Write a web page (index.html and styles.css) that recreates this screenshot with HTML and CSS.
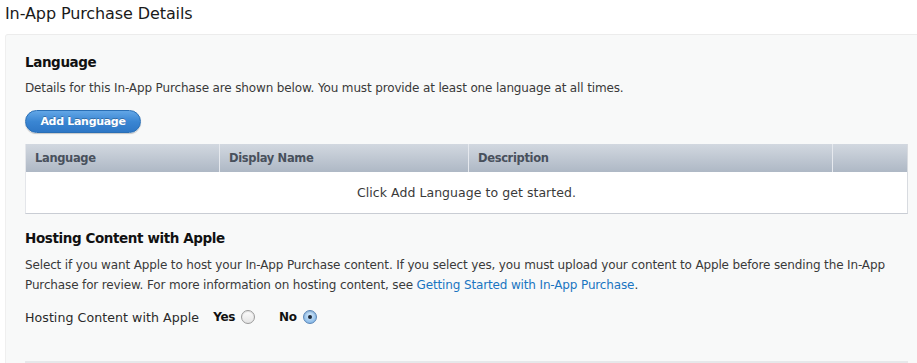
FILE: index.html
```html
<!DOCTYPE html>
<html>
<head>
<meta charset="utf-8">
<link rel="stylesheet" href="styles.css">
</head>
<body>
<h1 class="page-title">In-App Purchase Details</h1>
<div class="panel">
  <h2 class="section-title">Language</h2>
  <p class="text desc">Details for this In-App Purchase are shown below. You must provide at least one language at all times.</p>
  <button class="btn">Add Language</button>
  <div class="table">
    <div class="thead">
      <div class="th c1">Language</div>
      <div class="th c2">Display Name</div>
      <div class="th c3">Description</div>
      <div class="th c4"></div>
    </div>
    <div class="tbody">Click Add Language to get started.</div>
  </div>
  <h2 class="section-title hosting">Hosting Content with Apple</h2>
  <p class="text para">Select if you want Apple to host your In-App Purchase content. If you select yes, you must upload your content to Apple before sending the In-App Purchase for review. For more information on hosting content, see <a class="link" href="#">Getting Started with In-App Purchase</a>.</p>
  <div class="radio-row">
    <span class="radio-label">Hosting Content with Apple</span>
    <span class="opt">Yes</span><span class="radio"></span>
    <span class="opt no">No</span><span class="radio checked"></span>
  </div>
  <div class="rule"></div>
</div>
</body>
</html>
```
FILE: styles.css
```css
html, body { margin: 0; padding: 0; background: #fff; }
body {
  font-family: "DejaVu Sans", "Liberation Sans", sans-serif;
  color: #333;
  font-size: 12px;
  overflow: hidden;
}
.page-title {
  margin: 0;
  padding: 4px 0 0 5px;
  height: 30px;
  box-sizing: border-box;
  font-size: 16px;
  font-weight: normal;
  color: #1a1a1a;
  letter-spacing: -0.1px;
}
.panel {
  margin-left: 5px;
  margin-top: 4px;
  background: #f8f9f9;
  border-top: 1px solid #ececec;
  border-left: 1px solid #efefef;
  border-radius: 3px 0 0 0;
  padding: 16px 0 0 19px;
  width: 912px;
  height: 360px;
  box-sizing: border-box;
}
.section-title {
  margin: 0;
  font-size: 13.5px;
  font-weight: bold;
  color: #111;
  height: 22px;
  line-height: 22px;
  letter-spacing: -0.4px;
}
.text {
  margin: 0;
  font-size: 12px;
  line-height: 20px;
  color: #3a3a3a;
  letter-spacing: -0.14px;
}
.desc { margin-top: 5px; }
.btn {
  display: block;
  margin-top: 12px;
  width: 116px;
  height: 23px;
  border-radius: 12px;
  border: 1px solid #2a6fb5;
  background: linear-gradient(#62a6e6, #3a86d3 50%, #2e77c6);
  color: #fff;
  font-family: inherit;
  font-weight: bold;
  font-size: 11px;
  letter-spacing: -0.3px;
  padding: 0;
  box-shadow: 0 1px 1px rgba(0,0,0,0.2);
  text-shadow: 0 -1px 0 rgba(0,0,0,0.25);
}
.table {
  margin-top: 11px;
  width: 883px;
  background: #fff;
  border-left: 1px solid #e4e6ea;
  border-right: 1px solid #d8dbe0;
  border-bottom: 1px solid #c9cdd4;
  box-sizing: border-box;
}
.thead {
  display: flex;
  height: 28px;
  background: linear-gradient(#d2d8e0, #aeb8c5);
}
.th {
  box-sizing: border-box;
  padding-left: 9px;
  line-height: 28px;
  font-weight: bold;
  font-size: 11.5px;
  color: #48505c;
  letter-spacing: -0.35px;
  border-right: 1px solid #e6e9ee;
}
.c1 { width: 194px; }
.c2 { width: 249px; }
.c3 { width: 364px; }
.c4 { flex: 1; border-right: 0; }
.tbody {
  height: 41px;
  line-height: 42px;
  text-align: center;
  color: #3a3a3a;
  font-size: 12.5px;
  letter-spacing: 0.05px;
}
.hosting { margin-top: 13px; }
.para { margin-top: 6px; width: 870px; }
.link { color: #1a75c1; text-decoration: none; }
.radio-row {
  display: flex;
  align-items: center;
  margin-top: 12px;
  height: 20px;
  font-size: 12.6px;
  letter-spacing: 0.05px;
}
.radio-label { color: #2a2a2a; margin-right: 14px; }
.opt { font-weight: bold; color: #111; margin-right: 6px; font-size: 12px; letter-spacing: -0.3px; }
.opt.no { margin-left: 24px; }
.radio {
  width: 12px;
  height: 12px;
  border-radius: 50%;
  border: 1px solid #9a9a9a;
  background: linear-gradient(#fdfdfd, #e4e4e4);
  box-shadow: inset 0 1px 1px rgba(0,0,0,0.12);
  position: relative;
}
.radio.checked {
  border-color: #5a86b8;
  background: radial-gradient(circle at 50% 40%, #d8ebfb, #8ebde9 70%, #6da5dc);
}
.radio.checked::after {
  content: "";
  position: absolute;
  width: 4px;
  height: 4px;
  border-radius: 50%;
  background: #1e2a3a;
  left: 4px;
  top: 4px;
}
.rule {
  margin-top: 34px;
  width: 883px;
  height: 2px;
  background: #e6e8ea;
}
```
